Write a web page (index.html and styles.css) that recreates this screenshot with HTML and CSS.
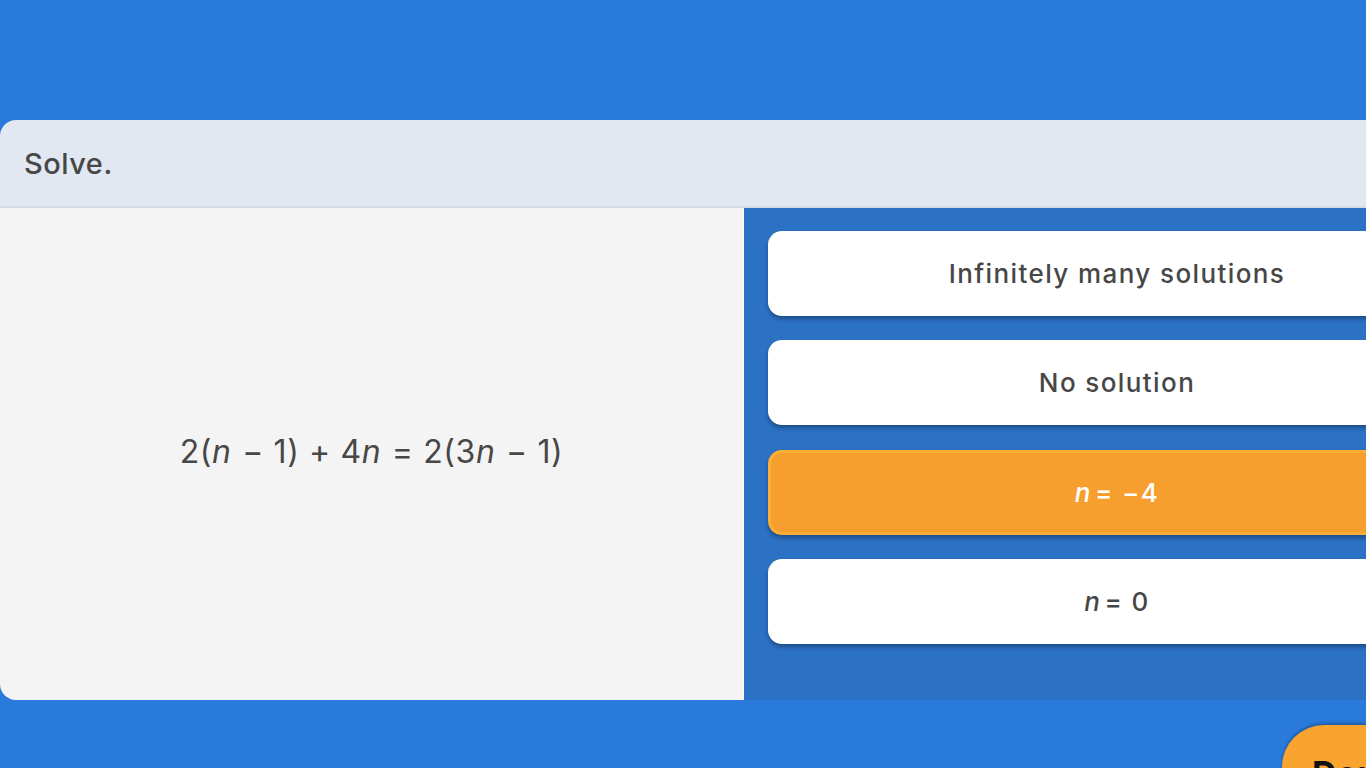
FILE: index.html
```html
<!DOCTYPE html>
<html lang="en">
<head>
    <meta charset="UTF-8">
    <meta name="viewport" content="width=device-width, initial-scale=1.0">
    <title>Solve</title>
    <link rel="stylesheet" href="styles.css">
</head>
<body>

    <div class="page">
        <!-- Question card -->
        <div class="card">
            <div class="card-header">Solve.</div>
            <div class="card-body">
                <div class="problem">
                    <span class="equation">2(<i>n</i> − 1) + 4<i>n</i> = 2(3<i>n</i> − 1)</span>
                </div>
                <div class="choices">
                    <div class="choice">Infinitely many solutions</div>
                    <div class="choice">No solution</div>
                    <div class="choice selected"><i>n</i> = −4</div>
                    <div class="choice"><i>n</i> = 0</div>
                </div>
            </div>
        </div>

        <!-- Footer -->
        <div class="footer">
            <button class="done-btn">Done</button>
        </div>
    </div>

</body>
</html>
```

FILE: styles.css
```css
body {
    font-family: Inter, "Open Sans", sans-serif;
    margin: 0;
    padding: 0;
    background-color: #297adb;
    color: #474747;
    overflow: hidden;
}
.page {
    width: 1490px;
    padding-top: 120px;
}
.card {
    border-radius: 16px 16px 0 16px;
    overflow: hidden;
}
.card-header {
    height: 86px;
    background-color: #e1e8f2;
    border-bottom: 2px solid #d6dade;
    font-size: 29px;
    font-weight: 500;
    letter-spacing: 0.5px;
    display: flex;
    align-items: center;
    padding-left: 24px;
}
.card-body {
    display: grid;
    grid-template-columns: 744px 1fr;
    height: 492px;
}
.problem {
    background-color: #f4f4f4;
    border-right: 1px solid #fafafa;
    display: flex;
    align-items: center;
    justify-content: center;
}
.equation {
    font-size: 32px;
    letter-spacing: 0.6px;
    margin-bottom: 6px;
}
.equation i {
    font-style: italic;
    margin-right: 0.03em;
}
.choice i {
    font-style: italic;
    margin-right: 0.12em;
}
.choices {
    background-color: #2c72c4;
    padding: 23px 24px;
    display: flex;
    flex-direction: column;
    gap: 24px;
}
.choice {
    height: 85px;
    box-sizing: border-box;
    background-color: white;
    border-radius: 14px;
    box-shadow: 0 3px 4px rgba(10, 30, 70, 0.45);
    display: flex;
    align-items: center;
    justify-content: center;
    font-size: 26px;
    font-weight: 500;
    letter-spacing: 1.4px;
}
.choice.selected {
    background-color: #f79f2e;
    border: 3px solid #fbae35;
    color: white;
    margin-top: 1px;
}
.footer {
    padding: 25px 0 0 1282px;
}
.done-btn {
    width: 200px;
    height: 84px;
    border: none;
    border-radius: 42px;
    background-color: #f8a42f;
    box-shadow: 0 -2px 3px rgba(0, 0, 0, 0.25);
    font-family: inherit;
    font-size: 34px;
    font-weight: 700;
    color: #111;
    text-align: left;
    padding: 14px 0 0 30px;
    display: block;
    line-height: 1;
}
```
